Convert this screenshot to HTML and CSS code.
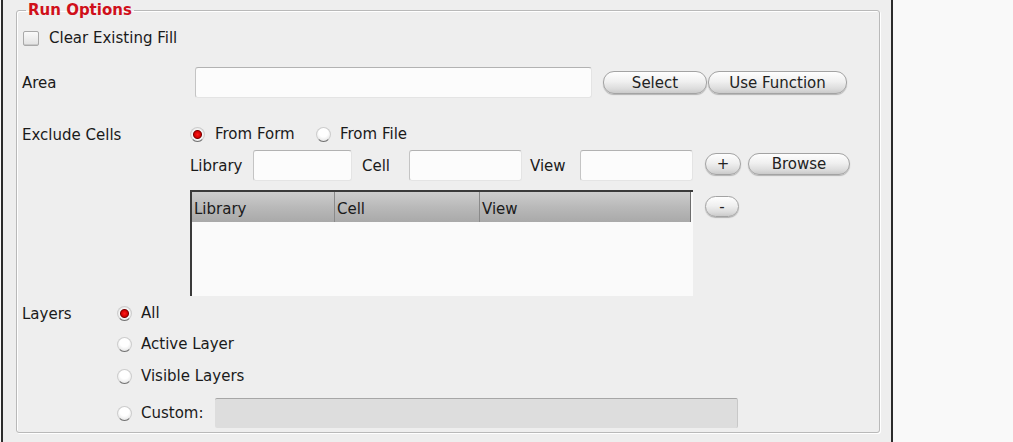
FILE: index.html
```html
<!DOCTYPE html>
<html lang="en">
<head>
    <meta charset="UTF-8">
    <title>Run Options</title>
    <link rel="stylesheet" href="styles.css">
</head>
<body>

    <div class="window">
        <fieldset class="group">
            <legend>Run Options</legend>

            <div class="row row-check">
                <span class="checkbox"></span>
                <span>Clear Existing Fill</span>
            </div>

            <div class="row row-area">
                <span class="lbl lbl-area">Area</span>
                <span class="field field-area"></span>
                <span class="btn btn-select">Select</span>
                <span class="btn btn-func">Use Function</span>
            </div>

            <div class="row row-exclude">
                <span class="lbl lbl-exclude">Exclude Cells</span>
                <span class="radio checked"></span>
                <span class="opt-form">From Form</span>
                <span class="radio"></span>
                <span>From File</span>
            </div>

            <div class="row row-fields">
                <span class="flbl flbl-lib">Library</span>
                <span class="field field-lib"></span>
                <span class="flbl flbl-cell">Cell</span>
                <span class="field field-cell"></span>
                <span class="flbl flbl-view">View</span>
                <span class="field field-view"></span>
                <span class="btn btn-plus">+</span>
                <span class="btn btn-browse">Browse</span>
            </div>

            <div class="row row-table">
                <div class="table">
                    <div class="thead">
                        <span class="th th-lib">Library</span>
                        <span class="th th-cell">Cell</span>
                        <span class="th th-view">View</span>
                    </div>
                    <div class="tbody"></div>
                </div>
                <span class="btn btn-minus">-</span>
            </div>

            <div class="row row-layers">
                <span class="lbl lbl-layers">Layers</span>
                <span class="radio checked"></span>
                <span>All</span>
            </div>

            <div class="row row-opt row-active">
                <span class="radio"></span>
                <span>Active Layer</span>
            </div>

            <div class="row row-opt">
                <span class="radio"></span>
                <span>Visible Layers</span>
            </div>

            <div class="row row-custom">
                <span class="radio"></span>
                <span>Custom:</span>
                <span class="field-disabled"></span>
            </div>
        </fieldset>
    </div>

    <div class="outside"></div>

</body>
</html>
```

FILE: styles.css
```css
body {
    margin: 0;
    font-family: 'DejaVu Sans', sans-serif;
    font-size: 15px;
    color: #1a1a1a;
    background-color: #f9f9f9;
    display: flex;
    height: 442px;
    overflow: hidden;
}

.window {
    margin-left: 1px;
    width: 888px;
    height: 442px;
    background-color: #eeeeee;
    border-left: 2px solid #2c2c2c;
    border-right: 2px solid #2c2c2c;
}

.outside {
    flex: 1;
    background-color: #f9f9f9;
}

.group {
    box-sizing: border-box;
    width: 864px;
    min-width: 0;
    margin: 1px 0 0 13px;
    padding: 0 0 4px 0;
    border: 1px solid #b9b9b9;
    border-radius: 3px;
    box-shadow: 1px 1px 0 #ffffff, inset 1px 1px 0 #ffffff;
}

.group legend {
    margin-left: 9px;
    padding: 0 2px;
    font-weight: bold;
    color: #d0101a;
    line-height: 18px;
}

.row {
    display: flex;
    align-items: center;
    white-space: nowrap;
}

/* rows, top to bottom */
.row-check {
    margin-top: 11px;
    height: 16px;
    padding-left: 6px;
}

.row-area {
    margin-top: 21px;
    height: 31px;
    padding-left: 5px;
}

.row-exclude {
    margin-top: 28px;
    height: 16px;
    padding-left: 5px;
}

.row-fields {
    margin-top: 8px;
    height: 31px;
    padding-left: 173px;
}

.row-table {
    margin-top: 9px;
    height: 106px;
    padding-left: 173px;
    align-items: flex-start;
}

.row-layers {
    margin-top: 9px;
    height: 16px;
    padding-left: 5px;
}

.row-opt {
    margin-top: 16px;
    height: 16px;
    padding-left: 100px;
}

.row-active {
    margin-top: 15px;
}

.row-custom {
    margin-top: 14px;
    height: 30px;
    padding-left: 100px;
}

.lbl {
    padding-top: 2px;
}

.lbl-area { width: 173px; padding-top: 0; }
.lbl-exclude { width: 168px; }
.lbl-layers { width: 95px; }

.opt-form {
    width: 101px;
    margin-left: 1px;
}

/* check box and radios */
.checkbox {
    box-sizing: border-box;
    width: 16px;
    height: 15px;
    margin-right: 10px;
    border: 1px solid #a9a9a9;
    border-radius: 2px;
    background: linear-gradient(#fafafa, #e2e2e2);
    box-shadow: inset 0 -1px 0 #c9c9c9;
}

.radio {
    box-sizing: border-box;
    width: 15px;
    height: 15px;
    margin-right: 9px;
    border-radius: 50%;
    border: 1px solid #cdcdcd;
    border-bottom-color: #6f6f6f;
    background: radial-gradient(circle at 50% 35%, #ffffff 40%, #dcdcdc 100%);
}

.radio.checked {
    background: radial-gradient(circle at 50% 50%, #ff1a1a 0, #d40000 3px, #7a0000 4px, #f4f4f4 5px, #d8d8d8 100%);
}

/* text fields */
.field {
    box-sizing: border-box;
    height: 31px;
    background-color: #fcfcfc;
    border: 1px solid #e4e4e4;
    border-top-color: #b2b2b2;
    border-left-color: #c4c4c4;
    border-radius: 3px;
}

.field-area { width: 397px; }
.field-lib { width: 99px; }
.field-cell { width: 113px; }
.field-view { width: 113px; }

.flbl-lib { width: 63px; }
.flbl-cell { margin-left: 10px; width: 47px; }
.flbl-view { margin-left: 8px; width: 50px; }

.field-disabled {
    box-sizing: border-box;
    width: 523px;
    height: 30px;
    margin-left: 11px;
    background-color: #dddddd;
    border-top: 1px solid #a6a6a6;
    border-right: 1px solid #c8c8c8;
    border-radius: 2px;
}

/* pill buttons */
.btn {
    box-sizing: border-box;
    display: flex;
    align-items: center;
    justify-content: center;
    height: 23px;
    border: 1px solid #a3a3a3;
    border-radius: 11px;
    background: linear-gradient(#fefefe, #f0f0f0 45%, #dcdcdc 80%, #cacaca);
    box-shadow: 0 1px 1px rgba(0, 0, 0, 0.25);
    color: #222;
}

.btn-select { margin-left: 11px; width: 104px; }
.btn-func { margin-left: 1px; width: 139px; }
.btn-plus { margin-left: 12px; width: 36px; height: 22px; margin-top: -4px; }
.btn-browse { margin-left: 7px; width: 102px; height: 22px; margin-top: -4px; }
.btn-minus { margin-left: 12px; margin-top: 6px; width: 34px; height: 21px; }

/* cell list */
.table {
    box-sizing: border-box;
    width: 503px;
    height: 106px;
    border-top: 2px solid #3a3a3a;
    border-left: 2px solid #3a3a3a;
    background-color: #fafafa;
}

.thead {
    display: flex;
    height: 30px;
    width: 498px;
    background: linear-gradient(#cdcdcd, #b9b9b9 50%, #a9a9a9);
    border-right: 1px solid #6d6d6d;
}

.th {
    box-sizing: border-box;
    display: flex;
    align-items: center;
    padding-left: 2px;
    padding-top: 4px;
    border-right: 1px solid #8a8a8a;
}

.th-lib { width: 143px; }
.th-cell { width: 145px; }
.th-view { flex: 1; border-right: none; }
```
